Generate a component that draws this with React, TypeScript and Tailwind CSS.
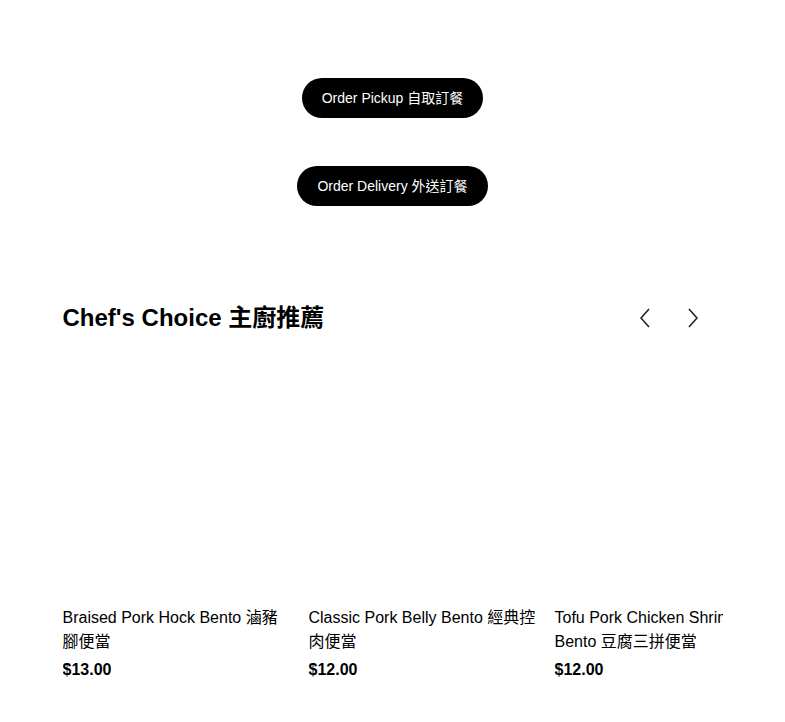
import type { ReactNode } from 'react';

const FONT = { fontFamily: '"Liberation Sans", "Noto Sans CJK TC", sans-serif' };

interface Dish {
  name: string;
  price: string;
}

const DISHES: Dish[] = [
  { name: 'Braised Pork Hock Bento 滷豬腳便當', price: '$13.00' },
  { name: 'Classic Pork Belly Bento 經典控肉便當', price: '$12.00' },
  { name: 'Tofu Pork Chicken Shrimp Bento 豆腐三拼便當', price: '$12.00' },
];

function PillButton({ children }: { children: ReactNode }) {
  return (
    <button className="h-10 rounded-full bg-black px-5 text-[14px] text-white">
      {children}
    </button>
  );
}

function Chevron({ dir }: { dir: 'left' | 'right' }) {
  return (
    <svg width="10" height="20" viewBox="0 0 10 20" fill="none">
      <path
        d={dir === 'left' ? 'M9 1 L1 10 L9 19' : 'M1 1 L9 10 L1 19'}
        stroke="#222"
        strokeWidth="1.6"
      />
    </svg>
  );
}

function DishCard({ dish }: { dish: Dish }) {
  return (
    <div className="flex w-[230px] shrink-0 flex-col">
      <div className="h-[245px] w-full bg-white" />
      <div className="mt-[5px] text-[16px] leading-6 text-black">{dish.name}</div>
      <div className="mt-1 text-[16px] leading-6 font-bold text-black">{dish.price}</div>
    </div>
  );
}

export default function App() {
  return (
    <div className="min-h-[722px] bg-white" style={FONT}>
      <div className="flex flex-col items-center gap-12 pt-[78px]">
        <PillButton>Order Pickup 自取訂餐</PillButton>
        <PillButton>Order Delivery 外送訂餐</PillButton>
      </div>

      <div className="mx-auto mt-[98px] w-[660px]">
        <div className="flex items-center justify-between">
          <h2 className="text-[24px] leading-7 font-bold text-black">Chef's Choice 主廚推薦</h2>
          <div className="mr-[18px] flex items-center gap-6">
            <button className="flex h-6 w-6 items-center justify-center">
              <Chevron dir="left" />
            </button>
            <button className="flex h-6 w-6 items-center justify-center">
              <Chevron dir="right" />
            </button>
          </div>
        </div>

        <div className="mt-[24px] overflow-hidden">
          <div className="flex gap-4">
            {DISHES.map((d) => (
              <DishCard key={d.name} dish={d} />
            ))}
          </div>
        </div>
      </div>
    </div>
  );
}
